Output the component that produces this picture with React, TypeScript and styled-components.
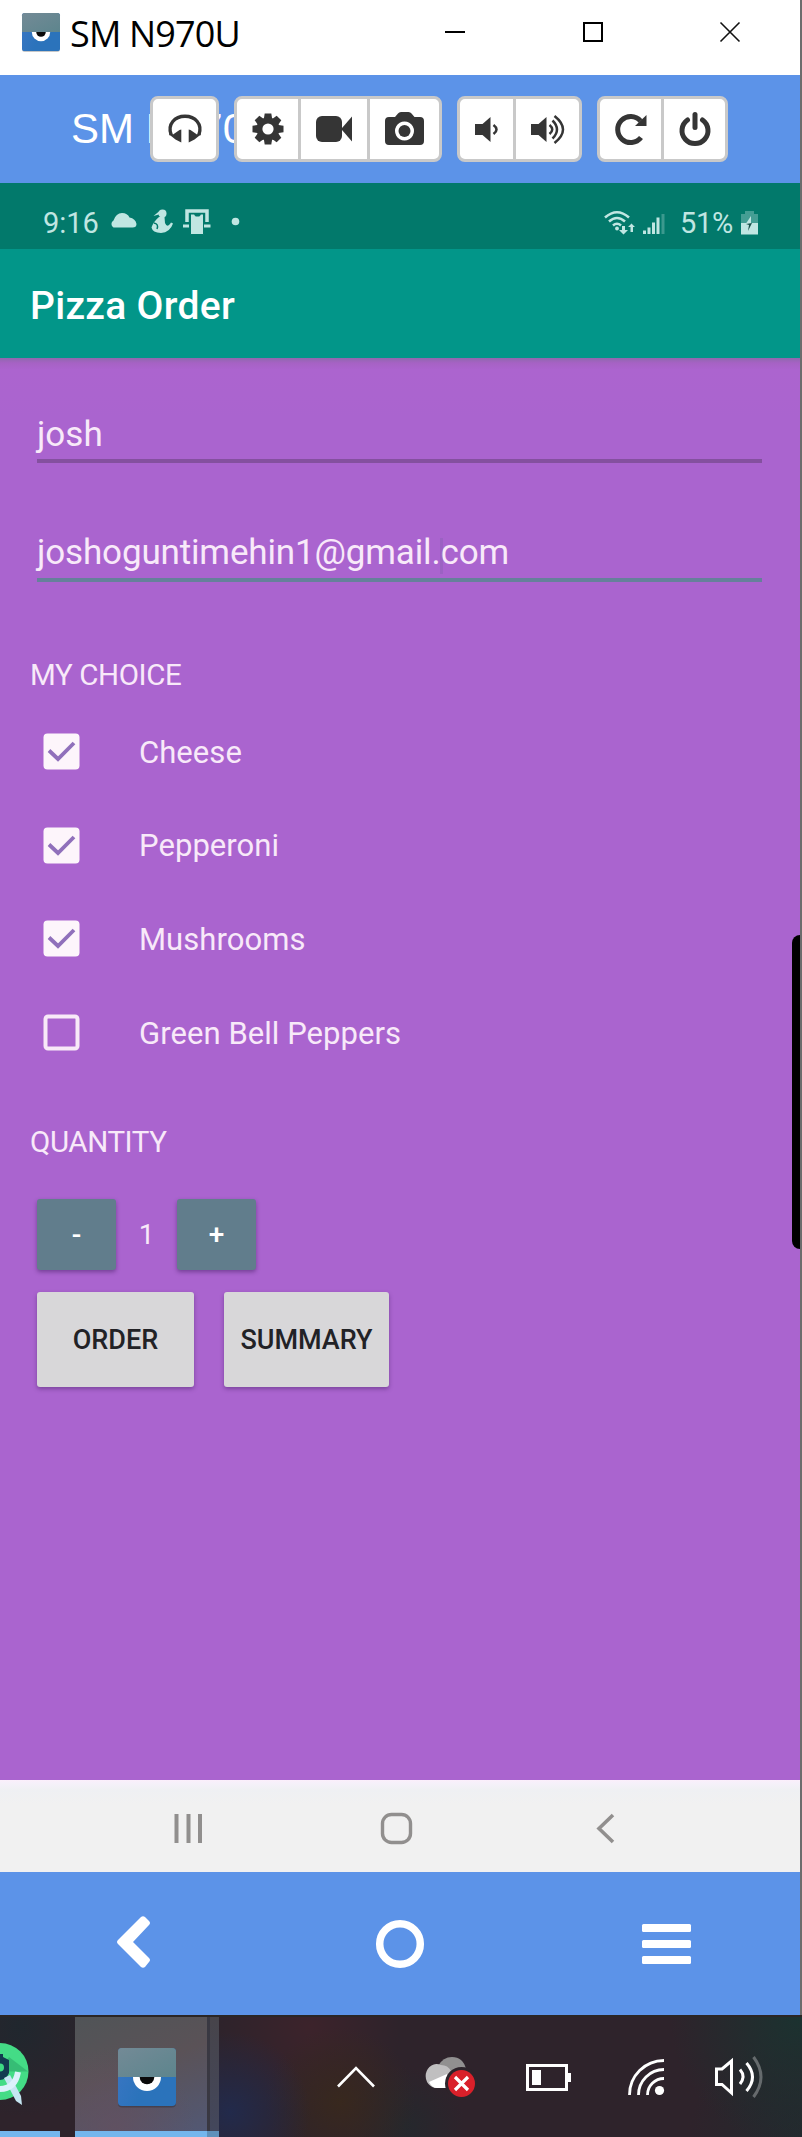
import React from "react";
import styled, { createGlobalStyle } from "styled-components";

const Global = createGlobalStyle`
  * { box-sizing: border-box; }
  body { margin: 0; background: #6c6c6c; font-family: Roboto, "Liberation Sans", sans-serif; }
  svg { display: block; flex: none; overflow: visible; }
  button { font: inherit; border: 0; padding: 0; background: none; color: inherit; }
`;

const Desktop = styled.div`
  width: 802px;
  height: 2137px;
  display: flex;
  flex-direction: column;
  overflow: hidden;
`;

const Window = styled.main`
  position: relative;
  width: 800px;
  height: 2015px;
  display: flex;
  flex-direction: column;
`;

const TitleBar = styled.header`
  height: 75px;
  background: #fff;
  display: flex;
  align-items: center;
  padding: 0 60px 11px 22px;
`;

const WindowTitle = styled.h1`
  margin: 3px 0 0 10px;
  flex: 1;
  font: 400 36px/44px "Open Sans", "Noto Sans", sans-serif;
  letter-spacing: -0.85px;
  color: #000;
`;

const WindowControls = styled.div`
  display: grid;
  grid-template-columns: 20px 20px 20px;
  column-gap: 117.5px;
`;

const Toolbar = styled.div`
  position: relative;
  height: 108px;
  background: #5c93e8;
  display: flex;
  align-items: center;
  padding-left: 150px;
  gap: 15px;
`;

const DeviceName = styled.span`
  position: absolute;
  left: 71px;
  top: 31px;
  font: 42px/46px "Liberation Sans", Arial, sans-serif;
  color: #fff;
`;

const ButtonGroup = styled.div`
  position: relative;
  display: flex;
  height: 66px;
  background: #fff;
  border: 3px solid #c9c9c9;
  border-radius: 8px;
`;

const ToolButton = styled.button<{ $w: number }>`
  width: ${(p) => p.$w}px;
  height: 60px;
  display: grid;
  place-items: center;
  color: #353535;
  & + & { border-left: 3px solid #c9c9c9; }
`;

const StatusBar = styled.div`
  height: 66px;
  background: #02796b;
  color: #c0e6e2;
  display: flex;
  align-items: center;
  padding: 13px 42px 0 43px;
  font-size: 29px;
  line-height: 34px;
`;

const StatusIcons = styled.div`
  margin: -2px 0 0 10px;
  flex: 1;
`;

const Percent = styled.span`
  margin: 0 8px 0 15px;
  letter-spacing: -0.3px;
`;

const AppBar = styled.div`
  height: 109px;
  background: #029689;
  color: #fff;
  display: flex;
  align-items: center;
  padding: 4px 0 0 30px;
  font-size: 39px;
  font-weight: 500;
  letter-spacing: 0.3px;
`;

const Form = styled.form`
  height: 1422px;
  background: linear-gradient(#8f68ae 0, #a662c4 5px, #ac64cf 12px, #aa64cf 60px);
  padding: 47px 38px 0 30px;
  color: #f8e9f9;
`;

const Field = styled.div<{ $active?: boolean }>`
  position: relative;
  height: ${(p) => (p.$active ? 63 : 58)}px;
  margin: ${(p) => (p.$active ? "56px" : "0")} 0 0 7px;
  border-bottom: ${(p) => (p.$active ? "4px solid #65809b" : "4px solid #84509f")};
  font-size: 35px;
  line-height: ${(p) => (p.$active ? 67 : 60)}px;
  letter-spacing: ${(p) => (p.$active ? -0.15 : 0)}px;
  white-space: nowrap;
`;

const Caret = styled.i`
  position: absolute;
  left: 403px;
  top: 19px;
  width: 3px;
  height: 36px;
  background: rgba(110, 90, 160, 0.25);
`;

const SectionLabel = styled.h2<{ $top: number }>`
  margin: ${(p) => p.$top}px 0 0;
  font-size: 29.5px;
  line-height: 36px;
  font-weight: 400;
  letter-spacing: -0.4px;
`;

const Choices = styled.div`
  margin-top: 12px;
`;

const Choice = styled.label`
  height: 93.6px;
  display: flex;
  align-items: center;
  padding-left: 13px;
  gap: 59px;
  font-size: 31px;
`;

const ChoiceText = styled.span`
  padding-top: 1px;
  letter-spacing: 0.06px;
`;

const Quantity = styled.div`
  display: flex;
  align-items: center;
  margin: 39px 0 0 7px;
  font-size: 28px;
`;

const Stepper = styled.button`
  width: 79px;
  height: 71px;
  border-radius: 3px;
  background: #617d8c;
  color: #fff;
  font-weight: 500;
  box-shadow: 0 2px 4px rgba(50, 20, 80, 0.45);
`;

const Count = styled.output`
  width: 61px;
  text-align: center;
`;

const Actions = styled.div`
  display: flex;
  gap: 30px;
  margin: 22px 0 0 7px;
`;

const Action = styled.button<{ $w: number }>`
  width: ${(p) => p.$w}px;
  height: 95px;
  border-radius: 3px;
  background: #d8d7d9;
  color: #222226;
  font-size: 27px;
  font-weight: 500;
  box-shadow: 0 2px 4px rgba(50, 20, 80, 0.4);
`;

const AndroidNav = styled.nav`
  height: 92px;
  background: linear-gradient(#fbeefb 0, #f6f0fa 3px, #eff0f3 10px, #f1f1f1 24px);
  display: grid;
  grid-template-columns: 207px 216px auto;
  align-items: center;
  padding: 5px 0 0 174px;
`;

const MirrorNav = styled.nav`
  height: 143px;
  background: #5c93e8;
  display: grid;
  grid-template-columns: 258.5px 266.5px auto;
  align-items: center;
  padding: 1px 0 0 117px;
  & > :first-child { margin-top: -4px; }
`;

const EdgeHandle = styled.div`
  position: absolute;
  right: 0;
  top: 935px;
  width: 8.5px;
  height: 314px;
  background: #000;
  border-radius: 8px 0 0 8px;
`;

const Taskbar = styled.footer`
  height: 122px;
  border-top: 2px solid #2a2626;
  display: flex;
  background:
    radial-gradient(circle at 800px 0, #1b3230 0, rgba(27, 50, 48, 0) 130px),
    radial-gradient(circle at 800px 120px, #23292e 0, rgba(35, 41, 46, 0) 110px),
    radial-gradient(circle at 230px 95px, #222a4b 0, rgba(34, 42, 75, 0) 80px),
    radial-gradient(circle at 340px 85px, #38281e 0, rgba(56, 40, 30, 0) 75px),
    radial-gradient(circle at 310px 10px, #3c232b 0, rgba(60, 35, 43, 0) 90px),
    radial-gradient(circle at 405px 110px, #25282d 0, rgba(37, 40, 45, 0) 60px),
    radial-gradient(circle at 20px 10px, #20272e 0, rgba(32, 39, 46, 0) 90px),
    #2e232b;
`;

const TaskItem = styled.div<{ $kind: "studio" | "active" | "stack" }>`
  height: 120px;
  width: ${(p) => ({ studio: 60, active: 132, stack: 12 })[p.$kind]}px;
  margin-right: ${(p) => (p.$kind === "studio" ? 15 : 0)}px;
  border-bottom: 6px solid ${(p) => (p.$kind === "stack" ? "#5f91bb" : "#74b6ed")};
  background: ${(p) =>
    ({
      studio: "none",
      active:
        "radial-gradient(circle at 40px 110px, rgba(98,80,96,.8), rgba(98,80,96,0) 80px), linear-gradient(160deg, #505457, #5a5257 45%, #525874)",
      stack: "linear-gradient(90deg, #393842 3px, transparent 3px), linear-gradient(#47444a, #43475c)",
    })[p.$kind]};
  display: flex;
  align-items: center;
  justify-content: ${(p) => (p.$kind === "active" ? "center" : "flex-start")};
  padding: ${(p) => (p.$kind === "active" ? "5px 0 0 12px" : "0")};
`;

const Tray = styled.div`
  flex: 1;
  display: grid;
  grid-template-columns: 90px 99px 102px 87px 1fr;
  align-items: center;
  padding: 0 0 0 118px;
`;

function MirrorLogo({ size }: { size: number }) {
  return (
    <svg width={size} height={size} viewBox="0 0 58 58">
      <defs>
        <linearGradient id="lid" x1="0" y1="0" x2="1" y2="1">
          <stop stopColor="#738a96" />
          <stop offset="1" stopColor="#5d858d" />
        </linearGradient>
        <linearGradient id="base" x1="0" y1="0" x2="1" y2="0.4">
          <stop stopColor="#3b76c4" />
          <stop offset="0.6" stopColor="#2b73bb" />
        </linearGradient>
        <clipPath id="lower"><rect y="29" width="58" height="29" /></clipPath>
      </defs>
      <rect y="1.5" width="58" height="58" rx="4" fill="#000" opacity="0.22" />
      <rect width="58" height="58" rx="4" fill="url(#base)" />
      <path d="M0 29V4a4 4 0 0 1 4-4h50a4 4 0 0 1 4 4v25z" fill="url(#lid)" />
      <g clipPath="url(#lower)">
        <circle cx="29" cy="29" r="14" fill="#fff" />
        <circle cx="29" cy="29" r="7.3" fill="#0a0a0a" />
      </g>
    </svg>
  );
}

const HeadphonesIcon = () => (
  <svg width="34" height="30" viewBox="0 0 34 30" fill="currentColor">
    <path d="M3.200 21C-1 10 7 2.200 17 2.200S35 10 30.800 21" fill="none" stroke="currentColor" strokeWidth="3.400" />
    <path d="M13.300 15.500V28.500L7.500 25.500 1.200 20.500 2 17.500 5 20.500 11.500 16z M20.700 15.500V28.500L26.500 25.500 32.800 20.500 32 17.500 29 20.500 22.500 16z" />
  </svg>
);

const GearIcon = () => (
  <svg width="32" height="32" viewBox="-16 -16 32 32" fill="currentColor">
    {[0, 45, 90, 135].map((a) => (
      <path key={a} transform={`rotate(${a})`} d="M-3.300-15.500h6.600l.8 5v21l-.8 5h-6.600l-.8-5v-21z" />
    ))}
    <circle r="11.500" />
    <circle r="5.600" fill="#fff" />
  </svg>
);

const VideoIcon = () => (
  <svg width="36" height="26" viewBox="0 0 36 26" fill="currentColor">
    <rect width="26" height="26" rx="6" />
    <path d="M26 12L36 .5v25L26 14z" />
  </svg>
);

const CameraIcon = () => (
  <svg width="39" height="35" viewBox="0 0 39 35" fill="currentColor">
    <path fillRule="evenodd" d="M10 5l3-3.500Q14 0 16 0h7.500q2 0 3 1.500L29.500 5H35q4 0 4 4v20q0 4-4 4H4q-4 0-4-4V9q0-4 4-4zM19.500 9.500a9.500 9.500 0 1 0 .01 0z" />
    <circle cx="19.500" cy="19" r="6" />
  </svg>
);

const VolumeLowIcon = () => (
  <svg width="24" height="25" viewBox="0 0 24 25" fill="currentColor">
    <path d="M0 7h7.500L15.500 0v25L7.500 18H0z" />
    <path d="M18.500 8q6 4.500 0 9" fill="none" stroke="currentColor" strokeWidth="2.600" />
  </svg>
);

const VolumeHighIcon = () => (
  <svg width="34" height="29" viewBox="0 0 34 29" fill="currentColor">
    <path d="M0 9h7.500L15.500 2v25L7.500 20H0z" />
    <path d="M18.500 10q5.500 4.500 0 9M21.500 5.500q9 9 0 18M23.500 1q17 13.500 0 27" fill="none" stroke="currentColor" strokeWidth="2.500" />
  </svg>
);

const RepeatIcon = () => (
  <svg width="32" height="31" viewBox="0 0 32 31" fill="currentColor">
    <path d="M25.500 7A13 13 0 1 0 26 23.500" fill="none" stroke="currentColor" strokeWidth="5" />
    <path d="M31.500 1v11H20z" />
  </svg>
);

const PowerIcon = () => (
  <svg width="32" height="34" viewBox="0 0 32 34" fill="none" stroke="currentColor" strokeWidth="5" strokeLinecap="round">
    <path d="M8.500 8A13 13 0 1 0 23.500 8" />
    <path d="M16 2.500v13" />
  </svg>
);

const NotificationIcons = () => (
  <svg width="132" height="28" viewBox="0 0 132 28" fill="currentColor">
    <path d="M4.500 19.500a4 4 0 0 1 0-7Q7 5 13 5q5.500 0 7.500 4.500 6 1 7 6.500 0 3.500-4 3.500z" />
    <circle cx="53.500" cy="5.500" r="4" />
    <path d="M44.500 8l6-5 1 3z" />
    <path d="M50 9h5.500l.5 6q2 5 5 1l1-1.500 2 1q-3 9-12 9.500-8.500-.5-9.500-5.500 2-6 7.500-10.500z" />
    <path d="M45 15q5 1 3 6" fill="none" stroke="#02796b" strokeWidth="1.500" />
    <path d="M78 14V3h20v11" fill="none" stroke="currentColor" strokeWidth="3.500" />
    <path d="M74 16.500h6v3h-6zM95 16.500h6.500v3H95z" />
    <path d="M81.500 6h4l1 2h4l1-2h3v20.500h-13z" stroke="#02796b" strokeWidth="1" />
    <circle cx="126.500" cy="13.500" r="3.800" />
  </svg>
);

const SignalIcons = () => (
  <svg width="61" height="27" viewBox="0 0 61 27" fill="currentColor">
    <path d="M1 8.500q12-10.500 24 0M5 12.500q8-7 16 0M9 16.500q4-3.500 8 0" fill="none" stroke="currentColor" strokeWidth="2.600" />
    <circle cx="13" cy="19.500" r="1.900" />
    <path d="M18 17h3v4h3l-4.500 4.500L15 21h3zM24 18l3.500-3.500L31 18h-2v5h-2.500v-5z" />
    <path d="M39 21.500h3V25h-3zM43.500 18.500h3V25h-3zM48 13.500h3V25h-3zM52.500 8.500h3V25h-3z" />
    <path d="M57.500 5h3v20h-3z" opacity="0.3" />
  </svg>
);

const BatteryIcon = () => (
  <svg width="17" height="24" viewBox="0 0 17 24">
    <path d="M0 3h4V0h9v3h4v10H0z" fill="currentColor" opacity="0.35" />
    <path d="M0 12h17v11.500H0z" fill="currentColor" />
    <path d="M10 5L5 12.500H10z" fill="currentColor" />
    <path d="M5 13l6-1-4 8 1-6z" fill="#184f49" />
  </svg>
);

const CheckBox = ({ checked }: { checked: boolean }) => (
  <svg width="37" height="37" viewBox="0 0 37 37">
    {checked ? (
      <>
        <rect x=".5" y=".5" width="36" height="36" rx="4" fill="#fdf5fb" />
        <path d="M6 17.500l9 8.500L31 10" fill="none" stroke="#9070bb" strokeWidth="3.800" />
      </>
    ) : (
      <rect x="2.500" y="2.500" width="32" height="32" rx="2.500" fill="none" stroke="#f8e9f8" strokeWidth="4" />
    )}
  </svg>
);

const StudioIcon = () => (
  <svg width="29" height="62" viewBox="0 0 29 62">
    <circle cx="0" cy="28.500" r="28.500" fill="#44dc86" />
    <path d="M9 14L28 28.500H0z" fill="#36bd75" />
    <path d="M0 11h3v3l6 3v13q-3 7-9 7z" fill="#123c50" />
    <circle cx="0" cy="24.500" r="4" fill="#3ddc84" />
    <path d="M4 35l6-3 11 21 1 9-6-4z" fill="#c5e6f2" />
    <path d="M18 29Q15 46 0 46" fill="none" stroke="#dcf1fb" strokeWidth="6" />
  </svg>
);

const toolGroups = [
  [{ label: "Audio", w: 63, icon: <HeadphonesIcon /> }],
  [
    { label: "Settings", w: 61, icon: <GearIcon /> },
    { label: "Record", w: 69, icon: <VideoIcon /> },
    { label: "Screenshot", w: 72, icon: <CameraIcon /> },
  ],
  [
    { label: "Volume down", w: 53, icon: <VolumeLowIcon /> },
    { label: "Volume up", w: 66, icon: <VolumeHighIcon /> },
  ],
  [
    { label: "Rotate", w: 61, icon: <RepeatIcon /> },
    { label: "Power", w: 64, icon: <PowerIcon /> },
  ],
];

const toppings = [
  { name: "Cheese", checked: true },
  { name: "Pepperoni", checked: true },
  { name: "Mushrooms", checked: true },
  { name: "Green Bell Peppers", checked: false },
];

export default function App() {
  return (
    <Desktop>
      <Global />
      <Window>
        <TitleBar>
          <MirrorLogo size={38} />
          <WindowTitle>SM N970U</WindowTitle>
          <WindowControls>
            <svg width="20" height="20"><path d="M0 10h20" stroke="#000" strokeWidth="2" /></svg>
            <svg width="20" height="20"><rect x="1" y="1" width="18" height="18" fill="none" stroke="#000" strokeWidth="2" /></svg>
            <svg width="20" height="20"><path d="M.5.5l19 19M19.500.5l-19 19" stroke="#111" strokeWidth="1.600" /></svg>
          </WindowControls>
        </TitleBar>

        <Toolbar>
          <DeviceName>SM N970U</DeviceName>
          {toolGroups.map((group, i) => (
            <ButtonGroup key={i}>
              {group.map((t) => (
                <ToolButton key={t.label} type="button" aria-label={t.label} $w={t.w}>{t.icon}</ToolButton>
              ))}
            </ButtonGroup>
          ))}
        </Toolbar>

        <StatusBar>
          <span>9:16</span>
          <StatusIcons><NotificationIcons /></StatusIcons>
          <SignalIcons />
          <Percent>51%</Percent>
          <BatteryIcon />
        </StatusBar>

        <AppBar>Pizza Order</AppBar>

        <Form>
          <Field>josh</Field>
          <Field $active>joshoguntimehin1@gmail.com<Caret /></Field>
          <SectionLabel $top={75}>MY CHOICE</SectionLabel>
          <Choices>
            {toppings.map((t) => (
              <Choice key={t.name}>
                <CheckBox checked={t.checked} />
                <ChoiceText>{t.name}</ChoiceText>
              </Choice>
            ))}
          </Choices>
          <SectionLabel $top={45}>QUANTITY</SectionLabel>
          <Quantity>
            <Stepper type="button">-</Stepper>
            <Count>1</Count>
            <Stepper type="button">+</Stepper>
          </Quantity>
          <Actions>
            <Action type="button" $w={157}>ORDER</Action>
            <Action type="button" $w={165}>SUMMARY</Action>
          </Actions>
        </Form>

        <AndroidNav>
          <svg width="29" height="29"><path d="M2.500 0v29M14.500 0v29M26 0v29" stroke="#918f8e" strokeWidth="4" /></svg>
          <svg width="31" height="31"><rect x="1.500" y="1.500" width="28" height="28" rx="9" fill="none" stroke="#918f8e" strokeWidth="3.400" /></svg>
          <svg width="17" height="29"><path d="M16 1L2 14.500 16 28" fill="none" stroke="#918f8e" strokeWidth="3.600" /></svg>
        </AndroidNav>

        <MirrorNav>
          <svg width="33" height="52" viewBox="0 0 33 52"><path d="M1 24L24 1Q26-.5 28 1L32 5Q34 7 32 9L16 26 32 42Q34 44 32 46L28 51Q26 52.500 24 51L1 28Q-1 26 1 24z" fill="#fff" /></svg>
          <svg width="48" height="48"><circle cx="24" cy="24" r="20.300" fill="none" stroke="#fff" strokeWidth="7.500" /></svg>
          <svg width="49" height="40" fill="#fff">
            <rect width="49" height="8" rx="1.500" />
            <rect y="16" width="49" height="8" rx="1.500" />
            <rect y="32" width="49" height="8" rx="1.500" />
          </svg>
        </MirrorNav>
        <EdgeHandle />
      </Window>

      <Taskbar>
        <TaskItem $kind="studio"><StudioIcon /></TaskItem>
        <TaskItem $kind="active"><MirrorLogo size={58} /></TaskItem>
        <TaskItem $kind="stack" />
        <Tray>
          <svg width="38" height="22"><path d="M1 20.500L19 2l18 18.500" fill="none" stroke="#fff" strokeWidth="2.600" /></svg>
          <svg width="49" height="41" viewBox="0 0 49 41">
            <path d="M11 9Q16 0 25 0q11 0 14 12L20 22z" fill="#919090" />
            <path d="M10 31a11 12 0 1 1 4-23q7 0 10 6L18 31z" fill="#c0bfc0" />
            <path d="M2 25l18-8v14H10q-5 0-8-6z" fill="#fff" />
            <circle cx="34.500" cy="26.500" r="16.500" fill="#2d242b" />
            <circle cx="34.500" cy="26.500" r="13.500" fill="#d9202a" />
            <path d="M28 20l13 13M41 20L28 33" stroke="#fff" strokeWidth="3.200" />
          </svg>
          <svg width="45" height="27">
            <rect x="1.500" y="1.500" width="39" height="24" fill="none" stroke="#fff" strokeWidth="3" />
            <path d="M6 6h9v15H6zM42 9h3v9h-3z" fill="#fff" />
          </svg>
          <svg width="36" height="36">
            <path d="M1.500 36A34.500 34.500 0 0 1 36 1.500M10.500 36A25.500 25.500 0 0 1 36 10.500M19.500 36A16.500 16.500 0 0 1 36 19.500" fill="none" stroke="#fff" strokeWidth="2.800" />
            <circle cx="31.500" cy="31.500" r="4.600" fill="#fff" />
          </svg>
          <svg width="48" height="42" fill="none" stroke="#fff" strokeWidth="3">
            <path d="M1.500 13H7L16.500 5v32L7 28.500H1.500z" />
            <path d="M25 13.500q6 7 0 14.500M31.500 7q12 14 0 28" />
            <path d="M38.500 1q15 20 0 40" opacity="0.3" />
          </svg>
        </Tray>
      </Taskbar>
    </Desktop>
  );
}
